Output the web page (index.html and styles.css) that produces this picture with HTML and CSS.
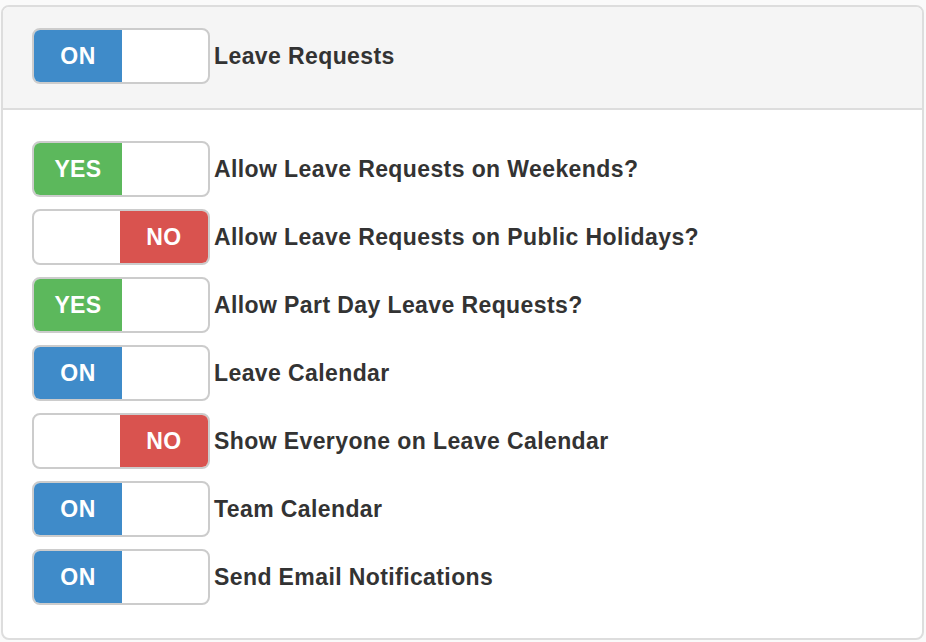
FILE: index.html
```html
<!DOCTYPE html>
<html>
<head>
<meta charset="utf-8">
<link rel="stylesheet" href="styles.css">
</head>
<body>
<div class="panel">
  <div class="panel-heading">
    <div class="row">
      <div class="switch on-left"><span class="half primary">ON</span><span class="half blank"></span></div>
      <span class="label">Leave Requests</span>
    </div>
  </div>
  <div class="panel-body">
    <div class="row">
      <div class="switch"><span class="half success">YES</span><span class="half blank"></span></div>
      <span class="label">Allow Leave Requests on Weekends?</span>
    </div>
    <div class="row">
      <div class="switch"><span class="half blank"></span><span class="half danger">NO</span></div>
      <span class="label">Allow Leave Requests on Public Holidays?</span>
    </div>
    <div class="row">
      <div class="switch"><span class="half success">YES</span><span class="half blank"></span></div>
      <span class="label">Allow Part Day Leave Requests?</span>
    </div>
    <div class="row">
      <div class="switch"><span class="half primary">ON</span><span class="half blank"></span></div>
      <span class="label">Leave Calendar</span>
    </div>
    <div class="row">
      <div class="switch"><span class="half blank"></span><span class="half danger">NO</span></div>
      <span class="label">Show Everyone on Leave Calendar</span>
    </div>
    <div class="row">
      <div class="switch"><span class="half primary">ON</span><span class="half blank"></span></div>
      <span class="label">Team Calendar</span>
    </div>
    <div class="row">
      <div class="switch"><span class="half primary">ON</span><span class="half blank"></span></div>
      <span class="label">Send Email Notifications</span>
    </div>
  </div>
</div>
</body>
</html>
```

FILE: styles.css
```css
html, body {
  margin: 0;
  background: #fafafa;
}
body {
  padding: 5px 2px 0 1px;
  font-family: "Liberation Sans", Arial, Helvetica, sans-serif;
  color: #333;
}
.panel {
  width: 919px;
  height: 631px;
  border: 2px solid #ddd;
  border-radius: 8px;
  background: #fff;
  overflow: hidden;
  display: flex;
  flex-direction: column;
}
.panel-heading {
  background: #f5f5f5;
  border-bottom: 2px solid #ddd;
  padding: 21px 0 24px 29px;
}
.panel-body {
  padding: 31px 0 0 29px;
  display: flex;
  flex-direction: column;
  gap: 12px;
}
.row {
  display: flex;
  align-items: center;
}
.switch {
  width: 174px;
  height: 52px;
  border: 2px solid #ccc;
  border-radius: 8px;
  overflow: hidden;
  display: flex;
  background: #fff;
  flex: none;
}
.half {
  width: 88px;
  height: 100%;
  display: flex;
  align-items: center;
  justify-content: center;
  color: #fff;
  font-weight: bold;
  font-size: 23px;
  letter-spacing: 0.4px;
}
.half.blank { width: 86px; }
.primary { background: #3f8bc9; }
.success { background: #5cb85c; }
.danger { background: #d9534f; }
.label {
  margin-left: 4px;
  font-weight: bold;
  font-size: 23px;
  letter-spacing: 0.4px;
  color: #333;
}
```
